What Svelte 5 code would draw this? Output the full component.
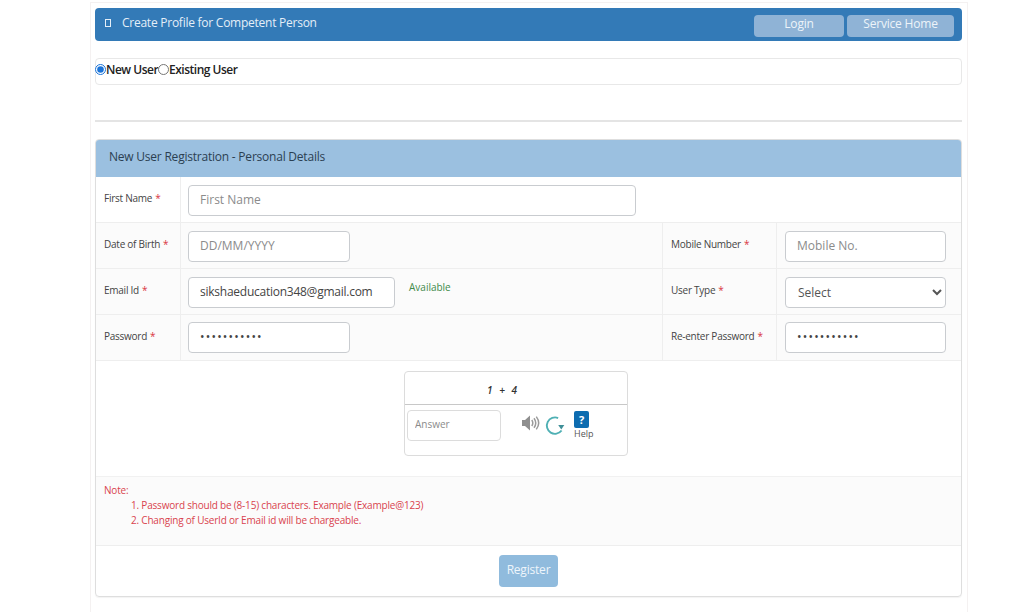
<script lang="ts">
	const userModes = [
		{ value: 'new', label: 'New User', checked: true },
		{ value: 'existing', label: 'Existing User', checked: false }
	];
</script>

<div class="page">
	<div class="title-bar">
		<div class="title">
			<span class="tofu"></span>
			<span>Create Profile for Competent Person</span>
		</div>
		<div class="title-actions">
			<button class="bar-btn login">Login</button>
			<button class="bar-btn home">Service Home</button>
		</div>
	</div>

	<div class="mode-box">
		{#each userModes as mode}
			<label class="mode">
				<input type="radio" name="mode" value={mode.value} checked={mode.checked} />
				<span>{mode.label}</span>
			</label>
		{/each}
	</div>

	<hr />

	<div class="panel">
		<div class="panel-head">New User Registration - Personal Details</div>

		<div class="row white">
			<div class="label">First Name <em>*</em></div>
			<div class="cell wide"><input class="field first" placeholder="First Name" /></div>
		</div>

		<div class="row">
			<div class="label">Date of Birth <em>*</em></div>
			<div class="cell"><input class="field short" placeholder="DD/MM/YYYY" /></div>
			<div class="label side">Mobile Number <em>*</em></div>
			<div class="cell"><input class="field right" placeholder="Mobile No." /></div>
		</div>

		<div class="row">
			<div class="label">Email Id <em>*</em></div>
			<div class="cell email-cell">
				<input class="field email" value="sikshaeducation348@gmail.com" />
				<span class="available">Available</span>
			</div>
			<div class="label side">User Type <em>*</em></div>
			<div class="cell">
				<select class="field right select">
					<option>Select</option>
				</select>
			</div>
		</div>

		<div class="row pass-row">
			<div class="label">Password <em>*</em></div>
			<div class="cell"><input class="field short secret" type="password" value="Example@123" /></div>
			<div class="label side">Re-enter Password <em>*</em></div>
			<div class="cell"><input class="field right secret" type="password" value="Example@123" /></div>
		</div>

		<div class="captcha-row">
			<div class="captcha">
				<div class="sum">1 + 4</div>
				<div class="captcha-body">
					<input class="answer" placeholder="Answer" />
					<svg class="speaker" width="18" height="16" viewBox="0 0 18 16" aria-hidden="true">
						<path d="M0 5h3l5-4.500v15L3 11H0z" fill="#8f8f8f" />
						<path d="M9.800 5c1.200 1.800 1.200 4.200 0 6M12 3.200c2.200 3 2.200 6.600 0 9.600M14.300 1.600c3 4 3 8.800 0 12.800" fill="none" stroke="#9a9a9a" stroke-width="1.500" />
					</svg>
					<svg class="refresh" width="21" height="21" viewBox="0 0 20 20" aria-hidden="true">
						<path d="M12.500 2.900A7.800 7.800 0 1 0 15.800 14.800" fill="none" stroke="#4fb0b4" stroke-width="1.800" />
						<path d="M12.600 9.500h5.800l-2.900 4.300z" fill="#3f8f98" />
					</svg>
					<div class="help">
						<span class="help-box">?</span>
						<span class="help-text">Help</span>
					</div>
				</div>
			</div>
		</div>

		<div class="note">
			<div>Note:</div>
			<div class="note-line">1. Password should be (8-15) characters. Example (Example@123)</div>
			<div class="note-line">2. Changing of UserId or Email id will be chargeable.</div>
		</div>

		<div class="panel-foot">
			<button class="register">Register</button>
		</div>
	</div>
</div>

<style>
	:global(body) {
		margin: 0;
		background: #fff;
		font-family: 'Open Sans', 'Noto Sans', sans-serif;
		color: #333;
	}

	.page {
		box-sizing: border-box;
		width: 878px;
		height: 610px;
		margin-left: 90px;
		margin-top: 2px;
		padding: 5px 5px 0 4px;
		border: 1px solid #f4f1f1;
		border-bottom: 0;
		overflow: hidden;
	}

	.title-bar {
		height: 33px;
		background: #337ab7;
		border-radius: 4px;
		display: flex;
		justify-content: space-between;
		color: #e4eef7;
	}

	.title {
		display: flex;
		align-items: center;
		font-size: 12px;
		letter-spacing: -0.25px;
		height: 29px;
		padding-left: 10px;
	}

	.tofu {
		box-sizing: border-box;
		width: 6px;
		height: 8px;
		border: 1px solid #e4eef7;
		margin-right: 11px;
	}

	.title-actions {
		display: flex;
		gap: 3px;
		padding: 7px 8px 0 0;
	}

	.bar-btn {
		height: 22px;
		padding: 0 0 11px;
		border: 0;
		border-radius: 4px;
		background: #8fb3d6;
		color: #edf3f9;
		font: inherit;
		font-size: 12px;
		letter-spacing: -0.2px;
	}

	.login { width: 90px; }
	.home { width: 107px; }

	.mode-box {
		box-sizing: border-box;
		height: 27px;
		margin-top: 17px;
		border: 1px solid #e8e8e8;
		border-radius: 4px;
		display: flex;
		align-items: center;
		padding-bottom: 4px;
	}

	.mode {
		display: flex;
		align-items: center;
		font-size: 12px;
		font-weight: 600;
		letter-spacing: -0.5px;
		color: #222;
	}

	.mode:first-child {
		margin-left: -1px;
	}

	.mode input {
		width: 11px;
		height: 11px;
		margin: 0;
		accent-color: #1a73d8;
	}

	hr {
		height: 2px;
		margin: 35px 0 17px;
		border: 0;
		background: #e4e4e4;
	}

	.panel {
		height: 458px;
		box-sizing: border-box;
		border: 1px solid #dedede;
		border-radius: 4px;
		box-shadow: 0 1px 1px rgba(0, 0, 0, 0.05);
		overflow: hidden;
	}

	.panel-head {
		height: 37px;
		box-sizing: border-box;
		display: flex;
		align-items: center;
		padding: 0 0 5px 13px;
		background: #9bc0e0;
		color: #2b3f52;
		font-size: 12px;
		letter-spacing: -0.22px;
	}

	.row {
		display: grid;
		grid-template-columns: 85px 482px 114px 1fr;
		height: 46px;
		box-sizing: border-box;
		border-bottom: 1px solid #eeeeee;
		background: #fbfbfb;
	}

	.row.white {
		grid-template-columns: 85px 1fr;
		background: #fff;
	}

	.label {
		display: flex;
		align-items: center;
		gap: 3px;
		padding-left: 8px;
		padding-bottom: 3px;
		border-right: 1px solid #eeeeee;
		font-size: 10px;
		letter-spacing: -0.25px;
		color: #444;
	}

	.label.side {
		padding-left: 8px;
	}

	.label em {
		color: #d9343f;
		font-style: normal;
	}

	.cell {
		display: flex;
		align-items: flex-start;
		padding: 8px 0 0 7px;
		border-right: 1px solid #eeeeee;
	}

	.cell:last-child {
		border-right: 0;
		padding-left: 8px;
	}

	.cell.wide {
		padding-left: 7px;
	}

	.pass-row .cell {
		padding-top: 7px;
	}

	.field {
		box-sizing: border-box;
		height: 31px;
		padding: 0 11px 2px;
		border: 1px solid #c9ccd0;
		border-radius: 4px;
		background: #fff;
		color: #444;
		font-family: inherit;
		font-size: 12px;
	}

	.field::placeholder,
	.answer::placeholder {
		color: #8b8b8b;
		opacity: 1;
	}

	.secret {
		letter-spacing: 1.200px;
	}

	.first { width: 448px; }
	.short { width: 162px; }
	.email { width: 207px; letter-spacing: -0.25px; }
	.right { width: 161px; }

	.select {
		padding: 0 8px;
		color: #555;
	}

	.available {
		margin: 3px 0 0 14px;
		font-size: 10px;
		color: #3f8a4a;
	}

	.captcha-row {
		height: 116px;
		box-sizing: border-box;
		padding: 10px 0 0 308px;
		border-bottom: 1px solid #f1f1f1;
	}

	.captcha {
		box-sizing: border-box;
		width: 224px;
		height: 85px;
		border: 1px solid #dcdcdc;
		border-radius: 4px;
	}

	.sum {
		height: 33px;
		line-height: 36px;
		box-sizing: border-box;
		padding-right: 28px;
		border-bottom: 1px solid #c8c8c8;
		text-align: center;
		font-size: 10px;
		font-style: italic;
		font-weight: 600;
		word-spacing: 4px;
		color: #333;
	}

	.captcha-body {
		display: flex;
		align-items: flex-start;
		padding: 5px 0 0 2px;
	}

	.answer {
		box-sizing: border-box;
		width: 94px;
		height: 31px;
		padding: 0 7px 3px;
		border: 1px solid #dcdcdc;
		border-radius: 4px;
		font-family: inherit;
		font-size: 10px;
	}

	.speaker {
		margin: 5px 0 0 21px;
	}

	.refresh {
		margin: 5px 0 0 5px;
	}

	.help {
		display: flex;
		flex-direction: column;
		align-items: flex-start;
		margin-left: 8px;
		margin-top: 1px;
	}

	.help-box {
		width: 15px;
		height: 17px;
		border-radius: 2px;
		background: #0d6cb0;
		color: #fff;
		font-size: 11px;
		font-weight: 700;
		line-height: 17px;
		text-align: center;
	}

	.help-text {
		font-size: 9px;
		line-height: 11px;
		color: #555;
	}

	.note {
		height: 69px;
		box-sizing: border-box;
		padding: 6px 8px 0;
		border-bottom: 1px solid #eeeeee;
		background: #fbfbfb;
		color: #d9434e;
		font-size: 10px;
		letter-spacing: -0.2px;
		line-height: 15px;
	}

	.note-line {
		padding-left: 27px;
	}

	.panel-foot {
		display: flex;
		justify-content: center;
		padding-top: 9px;
	}

	.register {
		width: 59px;
		height: 32px;
		padding: 0 0 3px;
		border: 0;
		border-radius: 4px;
		background: #90bbdd;
		color: #eef5fb;
		font: inherit;
		font-size: 12px;
		letter-spacing: -0.2px;
	}
</style>
